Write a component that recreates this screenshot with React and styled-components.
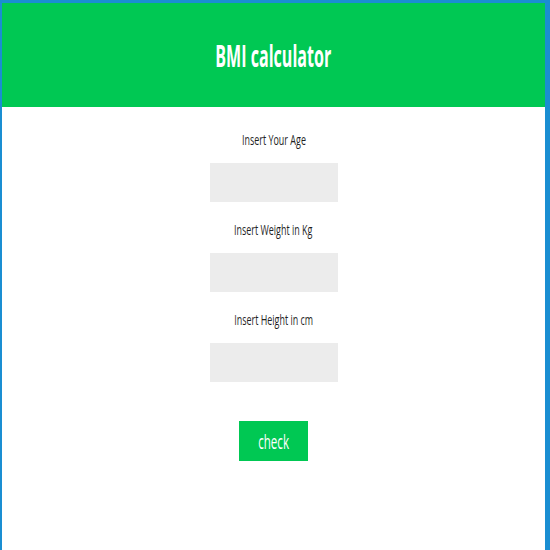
import React from "react";
import styled, { createGlobalStyle } from "styled-components";

const Global = createGlobalStyle`
  html, body { margin: 0; padding: 0; }
  body {
    background: #1a8ed2;
    font-family: "Open Sans", "Noto Sans", Arial, sans-serif;
  }
`;

const Frame = styled.div`
  margin: 3px 5px 0 2px;
  min-height: calc(100vh - 3px);
  background: #ffffff;
  display: flex;
  flex-direction: column;
`;

const Header = styled.header`
  height: 104px;
  background: #00c853;
  display: flex;
  align-items: center;
  justify-content: center;
`;

const Title = styled.h1`
  margin: 0;
  padding-top: 2px;
  color: #ffffff;
  font-size: 30px;
  font-weight: 700;
  line-height: 1;
  display: inline-block;
  transform: scaleX(0.535);
  white-space: nowrap;
`;

const Form = styled.form`
  display: flex;
  flex-direction: column;
  align-items: center;
  padding-top: 23px;
`;

const Group = styled.div`
  display: flex;
  flex-direction: column;
  align-items: center;
  margin-bottom: 18px;
  &:last-of-type { margin-bottom: 39px; }
`;

const Label = styled.label`
  display: inline-block;
  height: 20px;
  line-height: 20px;
  margin-bottom: 13px;
  font-size: 14px;
  color: #1f1f1f;
  white-space: nowrap;
  transform: scaleX(0.64);
`;

const Input = styled.input`
  width: 128px;
  height: 39px;
  box-sizing: border-box;
  border: none;
  outline: none;
  background: #ececec;
`;

const Button = styled.button`
  width: 69px;
  height: 40px;
  border: none;
  background: #00c853;
  color: #ffffff;
  display: flex;
  align-items: center;
  justify-content: center;
  padding: 0;
  cursor: pointer;
`;

const ButtonText = styled.span`
  display: inline-block;
  font-family: "Open Sans", "Noto Sans", Arial, sans-serif;
  font-size: 20px;
  font-weight: 500;
  transform: scaleX(0.58);
`;

const fields = ["Insert Your Age", "Insert Weight in Kg", "Insert Height in cm"];

export default function App() {
  return (
    <>
      <Global />
      <Frame>
        <Header>
          <Title>BMI calculator</Title>
        </Header>
        <Form onSubmit={(e) => e.preventDefault()}>
          {fields.map((f) => (
            <Group key={f}>
              <Label>{f}</Label>
              <Input type="text" />
            </Group>
          ))}
          <Button type="submit">
            <ButtonText>check</ButtonText>
          </Button>
        </Form>
      </Frame>
    </>
  );
}
